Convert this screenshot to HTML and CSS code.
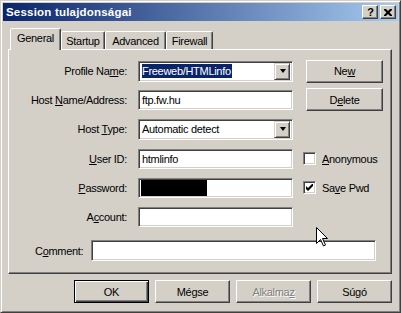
FILE: index.html
```html
<!DOCTYPE html>
<html>
<head>
<meta charset="utf-8">
<link rel="stylesheet" href="styles.css">
</head>
<body>
<div class="window">
  <div class="titlebar">
    <span class="title">Session tulajdonságai</span>
    <span class="tbtns">
      <span class="tbtn help">?</span>
      <span class="tbtn close">
        <svg width="8" height="7" viewBox="0 0 8 7"><path d="M0 0h2l2 2 2-2h2v1l-2.5 2.5L8 6v1H6L4 5 2 7H0V6l2.5-2.5L0 1z" fill="#000"/></svg>
      </span>
    </span>
  </div>

  <div class="tabs">
    <div class="tab active">General</div>
    <div class="tab t-startup">Startup</div>
    <div class="tab t-adv">Advanced</div>
    <div class="tab t-fw">Firewall</div>
  </div>

  <div class="panel">
    <div class="form">
      <label class="lbl">Profile Na<u>m</u>e:</label>
      <div class="combo">
        <span class="ctext"><span class="sel">Freeweb/HTMLinfo</span></span>
        <span class="dd"><span class="tri"></span></span>
      </div>
      <div class="side"><span class="btn sbtn">Ne<u>w</u></span></div>

      <label class="lbl">Host <u>N</u>ame/Address:</label>
      <div class="edit"><span class="etext">ftp.fw.hu</span></div>
      <div class="side"><span class="btn sbtn">D<u>e</u>lete</span></div>

      <label class="lbl">Host <u>T</u>ype:</label>
      <div class="combo">
        <span class="ctext">Automatic detect</span>
        <span class="dd"><span class="tri"></span></span>
      </div>
      <div class="side"></div>

      <label class="lbl"><u>U</u>ser ID:</label>
      <div class="edit"><span class="etext">htmlinfo</span></div>
      <div class="side"><span class="chk"><span class="box"></span><span class="ctxt"><u>A</u>nonymous</span></span></div>

      <label class="lbl"><u>P</u>assword:</label>
      <div class="edit"><span class="pw"></span></div>
      <div class="side"><span class="chk"><span class="box"><svg width="7" height="7" viewBox="0 0 7 7"><path d="M0 2v3l2 2 5-5V-1L2 4z" fill="#000"/></svg></span><span class="ctxt">Sa<u>v</u>e Pwd</span></span></div>

      <label class="lbl">A<u>c</u>count:</label>
      <div class="edit"></div>
      <div class="side"></div>
    </div>

    <div class="comment">
      <label class="clbl">C<u>o</u>mment:</label>
      <div class="edit cedit"></div>
    </div>
  </div>

  <div class="buttons">
    <span class="btn bbtn default">OK</span>
    <span class="btn bbtn">Mégse</span>
    <span class="btn bbtn disabled">Alkalma<u>z</u></span>
    <span class="btn bbtn">Súgó</span>
  </div>

  <svg class="cursor" width="12" height="20" viewBox="0 0 12 20">
    <path d="M0.5 0.5V16.5L4.5 12.5L7.5 19L9.5 18L6.5 11.5H11.5Z" fill="#fff" stroke="#000" stroke-width="1"/>
  </svg>
</div>
</body>
</html>
```

FILE: styles.css
```css
* { box-sizing: border-box; }
html, body { margin: 0; padding: 0; }
body {
  width: 401px;
  height: 313px;
  overflow: hidden;
  background: #d4d0c8;
  font-family: "Liberation Sans", Arial, sans-serif;
  font-size: 11px;
  letter-spacing: -0.3px;
  color: #000;
}
u { text-decoration: underline; text-underline-offset: 1px; }

.window {
  position: relative;
  width: 401px;
  height: 313px;
  background: #d4d0c8;
  border: 1px solid;
  border-color: #d4d0c8 #404040 #404040 #d4d0c8;
  box-shadow: inset 1px 1px #fff, inset -1px -1px #808080;
  padding: 2px;
}

.titlebar {
  height: 18px;
  display: flex;
  align-items: center;
  justify-content: space-between;
  padding: 0 2px 0 3px;
  background: linear-gradient(to right, #0a246a, #a6caf0);
}
.title {
  color: #fff;
  font-weight: bold;
  font-size: 11.5px;
  letter-spacing: 0.2px;
}
.tbtns { display: flex; gap: 2px; }
.tbtn {
  width: 16px;
  height: 14px;
  display: flex;
  align-items: center;
  justify-content: center;
  background: #d4d0c8;
  border: 1px solid;
  border-color: #fff #404040 #404040 #fff;
  box-shadow: inset -1px -1px #808080;
  font-weight: bold;
  font-size: 11px;
  letter-spacing: 0;
  line-height: 1;
}
.tbtn.help { padding-left: 1px; }

.tabs {
  display: flex;
  align-items: flex-end;
  height: 21px;
  margin: 7px 0 0 5px;
  padding-left: 2px;
}
.tab {
  height: 18px;
  display: flex;
  align-items: center;
  justify-content: center;
  border: 1px solid;
  border-bottom: none;
  border-color: #fff #404040 transparent #fff;
  border-radius: 2px 2px 0 0;
  box-shadow: inset -1px 0 #808080;
  padding-top: 1px;
}
.tab.active {
  position: relative;
  z-index: 2;
  width: 51px;
  height: 22px;
  margin-bottom: -1px;
  background: #d4d0c8;
  padding-top: 0;
  padding-bottom: 3px;
}
.t-startup { width: 44px; }
.t-adv { width: 61px; }
.t-fw { width: 47px; }

.panel {
  width: 384px;
  height: 225px;
  margin-left: 5px;
  border: 1px solid;
  border-color: #fff #404040 #404040 #fff;
  box-shadow: inset -1px -1px #808080;
  padding-top: 7px;
}

.form {
  display: grid;
  grid-template-columns: 119px 155px 80px;
  grid-template-rows: 28px 29px 30px 29px 29px 29px;
  column-gap: 10px;
  align-items: center;
}
.lbl {
  text-align: right;
  padding-right: 1px;
  white-space: nowrap;
}

.edit, .combo {
  height: 20px;
  background: #fff;
  border: 1px solid;
  border-color: #808080 #fff #fff #808080;
  box-shadow: inset 1px 1px #404040, inset -1px -1px #d4d0c8;
  display: flex;
  align-items: center;
  padding: 2px;
}
.combo { height: 21px; justify-content: space-between; }
.etext { padding-left: 1px; }
.ctext { padding-left: 1px; display: flex; align-items: center; }
.sel {
  background: #0a246a;
  color: #fff;
  padding: 1px 1px 1px 0;
}
.dd {
  width: 16px;
  height: 17px;
  background: #d4d0c8;
  border: 1px solid;
  border-color: #d4d0c8 #404040 #404040 #d4d0c8;
  box-shadow: inset 1px 1px #fff, inset -1px -1px #808080;
  display: flex;
  align-items: center;
  justify-content: center;
}
.tri {
  width: 0;
  height: 0;
  border-left: 3.5px solid transparent;
  border-right: 3.5px solid transparent;
  border-top: 4px solid #000;
  margin-left: 1px;
}
.pw {
  width: 66px;
  height: 16px;
  background: #000;
}

.side { display: flex; align-items: center; }
.btn {
  display: flex;
  align-items: center;
  justify-content: center;
  background: #d4d0c8;
  border: 1px solid;
  border-color: #fff #404040 #404040 #fff;
  box-shadow: inset -1px -1px #808080;
}
.sbtn {
  width: 77px;
  height: 23px;
  margin-left: 3px;
}

.chk { display: flex; align-items: center; gap: 6px; }
.box {
  width: 13px;
  height: 13px;
  background: #fff;
  border: 1px solid;
  border-color: #808080 #fff #fff #808080;
  box-shadow: inset 1px 1px #404040, inset -1px -1px #d4d0c8;
  display: flex;
  align-items: center;
  justify-content: center;
}

.comment {
  display: flex;
  align-items: center;
  margin-top: 9px;
  padding-left: 26px;
}
.clbl { width: 56px; }
.cedit { width: 285px; height: 21px; }

.buttons {
  display: flex;
  gap: 6px;
  margin: 6px 0 0 71px;
}
.bbtn {
  width: 75px;
  height: 23px;
}
.bbtn.default {
  border: 1px solid #000;
  box-shadow: inset 1px 1px #fff, inset -1px -1px #404040, inset -2px -2px #808080;
}
.bbtn.disabled {
  color: #808080;
  text-shadow: 1px 1px #fff;
}

.cursor {
  position: absolute;
  left: 315px;
  top: 226px;
}
```
